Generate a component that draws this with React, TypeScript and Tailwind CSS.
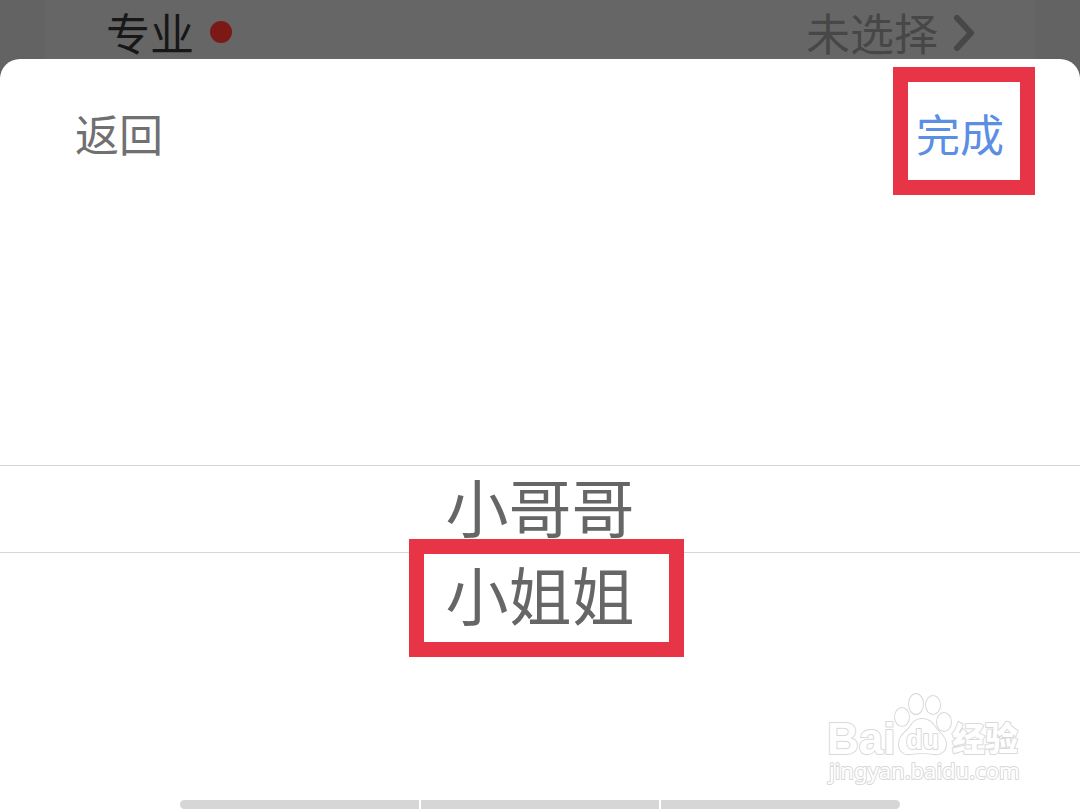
const options = ["小哥哥", "小姐姐"];

const ProfileRow = () => {
  return (
    <div className="h-[77px] bg-[#636363] px-[45px]">
      <div className="flex h-full items-start justify-between bg-[#666666] pl-[61px] pr-[59px] text-[44px] leading-[64px]">
        <div className="flex items-center gap-4 text-[#171717]">
          <span>专业</span>
          <span className="size-[22px] rounded-full bg-[#7c1815]" />
        </div>
        <button type="button" className="flex items-center gap-[14px] text-[#474747]">
          <span>未选择</span>
          <svg className="h-10 w-6" viewBox="0 0 24 40" fill="none" stroke="currentColor" strokeWidth="6">
            <path d="M5 6 L19 21 L5 36" strokeLinecap="round" strokeLinejoin="round" />
          </svg>
        </button>
      </div>
    </div>
  );
};

const Watermark = () => {
  return (
    <svg
      className="pointer-events-none absolute bottom-[19px] right-[54px] h-[100px] w-[200px]"
      viewBox="0 0 200 100"
      fill="#ffffff"
      stroke="#d9d9d9"
      strokeWidth="2"
      strokeLinejoin="round"
      style={{ paintOrder: "stroke" }}
    >
      <text x="1" y="64" className="font-['Liberation_Sans',sans-serif] text-[44px] font-bold">
        Bai
      </text>
      <ellipse cx="76" cy="27" rx="7" ry="9" />
      <ellipse cx="90" cy="14" rx="7" ry="10" />
      <ellipse cx="107" cy="15" rx="7" ry="9" />
      <ellipse cx="118" cy="32" rx="7" ry="9" />
      <path d="M96 29 C90 29 87 32 84 37 C81 42 73 45 73 54 C73 61 78 65 84 64 C90 63 102 63 108 64 C115 65 120 61 120 54 C120 46 112 42 109 37 C106 32 102 29 96 29 Z" />
      <text x="80" y="59" className="font-['Liberation_Sans',sans-serif] text-[27px] font-bold">
        du
      </text>
      <text x="126" y="61" className="font-['Noto_Sans_CJK_SC',sans-serif] text-[33px] font-black">
        经验
      </text>
      <text x="3" y="89" className="font-['Noto_Sans',sans-serif] text-[22px]">
        jingyan.baidu.com
      </text>
    </svg>
  );
};

const App = () => {
  return (
    <div className="relative flex min-h-screen flex-col bg-white font-['Noto_Sans_CJK_SC',sans-serif]">
      <ProfileRow />
      <div className="-mt-[18px] flex flex-1 flex-col rounded-t-[20px] bg-white">
        <div className="flex items-start justify-between pl-[75px] pr-[45px] pt-2 text-[44px] leading-[64px]">
          <button type="button" className="flex h-32 items-center pt-1 text-[#707070]">
            返回
          </button>
          <button
            type="button"
            className="flex h-32 w-[142px] items-center justify-center border-[15px] border-[#e83447] pr-2 pt-1 text-[#5a8fe3]"
          >
            完成
          </button>
        </div>

        <div className="mt-[270px]" role="listbox" aria-label="性别">
          {options.map((name, i) => (
            <div
              key={name}
              role="option"
              aria-selected={i === 0}
              className={
                i === 0
                  ? "flex h-[88px] items-center justify-center border-y border-[#d6d6d6] pb-2 text-[63px] text-[#666666]"
                  : "relative flex h-[88px] items-center justify-center pb-2 text-[63px] text-[#666666]"
              }
            >
              {name}
              {i === 1 && (
                <span className="absolute -top-[14px] left-1/2 -ml-[131px] h-[118px] w-[275px] border-[15px] border-[#e83447]" />
              )}
            </div>
          ))}
        </div>

        <div className="mx-auto mt-auto flex h-[9px] w-2/3 gap-[2px]">
          <div className="flex-1 rounded-l-full bg-[#d6d6d6]" />
          <div className="flex-1 bg-[#d6d6d6]" />
          <div className="flex-1 rounded-r-full bg-[#d6d6d6]" />
        </div>
      </div>
      <Watermark />
    </div>
  );
};

export default App;
